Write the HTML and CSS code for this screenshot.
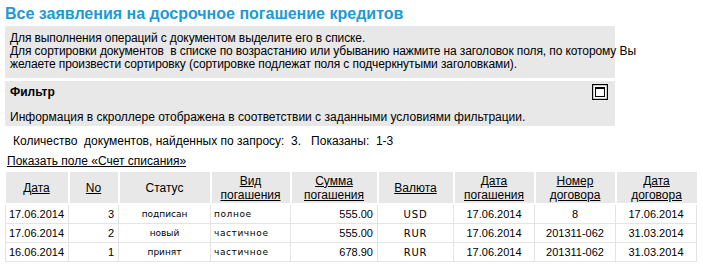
FILE: index.html
```html
<!DOCTYPE html>
<html lang="ru">
<head>
<meta charset="utf-8">
<title>Все заявления на досрочное погашение кредитов</title>
<link rel="stylesheet" href="styles.css">
</head>
<body>
<div class="page">
  <h1 class="title">Все заявления на досрочное погашение кредитов</h1>
  <div class="panel info">
    Для выполнения операций с документом выделите его в списке.<br>
    Для сортировки документов&nbsp; в списке по возрастанию или убыванию нажмите на заголовок поля, по которому Вы<br>
    желаете произвести сортировку (сортировке подлежат поля с подчеркнутыми заголовками).
  </div>
  <div class="panel filter">
    <div class="filter-head">
      <span class="filter-title">Фильтр</span>
      <svg class="win-icon" width="16" height="16" viewBox="0 0 16 16">
        <rect x="0.5" y="0.5" width="15" height="15" fill="#fff" stroke="#000" stroke-width="1.4"/>
        <rect x="3.5" y="3.5" width="9" height="9" fill="#fff" stroke="#000" stroke-width="1"/>
        <rect x="3" y="3" width="10" height="2" fill="#000"/>
      </svg>
    </div>
    <div class="filter-text">Информация в скроллере отображена в соответствии с заданными условиями фильтрации.</div>
  </div>
  <div class="count">Количество&nbsp; документов, найденных по запросу:&nbsp; 3.&nbsp;&nbsp; Показаны:&nbsp; 1-3</div>
  <a class="show-link" href="#">Показать поле «Счет списания»</a>
  <table class="grid">
    <colgroup>
      <col style="width:63px"><col style="width:50px"><col style="width:92px"><col style="width:80px"><col style="width:87px"><col style="width:76px"><col style="width:81px"><col style="width:81px"><col style="width:81px">
    </colgroup>
    <thead>
      <tr>
        <th><a href="#">Дата</a></th>
        <th><a href="#">No</a></th>
        <th>Статус</th>
        <th><a href="#">Вид<br>погашения</a></th>
        <th><a href="#">Сумма<br>погашения</a></th>
        <th><a href="#">Валюта</a></th>
        <th><a href="#">Дата<br>погашения</a></th>
        <th><a href="#">Номер<br>договора</a></th>
        <th><a href="#">Дата<br>договора</a></th>
      </tr>
    </thead>
    <tbody>
      <tr>
        <td class="l">17.06.2014</td><td class="r">3</td><td class="st">подписан</td><td class="kind">полное</td><td class="r">555.00</td><td class="cur">USD</td><td class="c">17.06.2014</td><td class="c">8</td><td class="c">17.06.2014</td>
      </tr>
      <tr>
        <td class="l">17.06.2014</td><td class="r">2</td><td class="st">новый</td><td class="kind">частичное</td><td class="r">555.00</td><td class="cur">RUR</td><td class="c">17.06.2014</td><td class="c">201311-062</td><td class="c">31.03.2014</td>
      </tr>
      <tr>
        <td class="l">16.06.2014</td><td class="r">1</td><td class="st">принят</td><td class="kind">частичное</td><td class="r">678.90</td><td class="cur">RUR</td><td class="c">17.06.2014</td><td class="c">201311-062</td><td class="c">31.03.2014</td>
      </tr>
    </tbody>
  </table>
</div>
</body>
</html>
```

FILE: styles.css
```css
html, body {
  margin: 0;
  padding: 0;
  background: #fff;
}
body {
  font-family: "Liberation Sans", Arial, sans-serif;
  font-size: 12px;
  color: #000;
}
.page {
  padding: 4px 5px 0 5px;
}
.title {
  margin: 0;
  font-size: 16px;
  line-height: 20px;
  font-weight: bold;
  color: #1b9ad6;
}
.panel {
  width: 610px;
  box-sizing: border-box;
  background: #e8e8e8;
}
.info {
  margin-top: 2px;
  padding: 6px 5px 6px 5px;
  line-height: 13px;
  height: 52px;
  white-space: nowrap;
  letter-spacing: -0.1px;
}
.filter {
  margin-top: 3px;
  height: 45px;
  padding: 3px 7px 0 5px;
}
.filter-head {
  display: flex;
  justify-content: space-between;
  align-items: flex-start;
}
.filter-title {
  font-weight: bold;
  margin-top: 1px;
  line-height: 14px;
}
.win-icon {
  display: block;
}
.filter-text {
  margin-top: 10px;
  line-height: 14px;
}
.count {
  margin-top: 8px;
  padding-left: 8px;
  line-height: 14px;
}
.show-link {
  display: block;
  width: max-content;
  margin-top: 6px;
  margin-left: 2px;
  color: #000;
  line-height: 14px;
}
.grid {
  margin-top: 4px;
  border-collapse: collapse;
  table-layout: fixed;
  width: 691px;
}
.grid th {
  background: #e8e8e8;
  border: 2px solid #fff;
  border-top: 0;
  font-weight: normal;
  height: 31px;
  padding: 0 2px;
  line-height: 14px;
  text-align: center;
}
.grid th:first-child { border-left: 0; }
.grid th:last-child { border-right: 0; }
.grid th a {
  color: #000;
}
.grid td {
  border: 1px solid #e4e4e4;
  height: 18px;
  padding: 0 3px;
  font-size: 11px;
  white-space: nowrap;
}
.grid td.l { text-align: left; }
.grid td.r { text-align: right; padding-right: 4px; }
.grid td.c { text-align: center; }
.grid td.st {
  text-align: center;
  font-family: "DejaVu Sans", Verdana, sans-serif;
  font-size: 9px;
}
.grid td.kind {
  font-family: "DejaVu Sans", Verdana, sans-serif;
  font-size: 9px;
  letter-spacing: 0.6px;
}
.grid td.cur {
  text-align: center;
  font-family: "DejaVu Sans", Verdana, sans-serif;
  font-size: 10px;
  letter-spacing: 0.8px;
}
```
